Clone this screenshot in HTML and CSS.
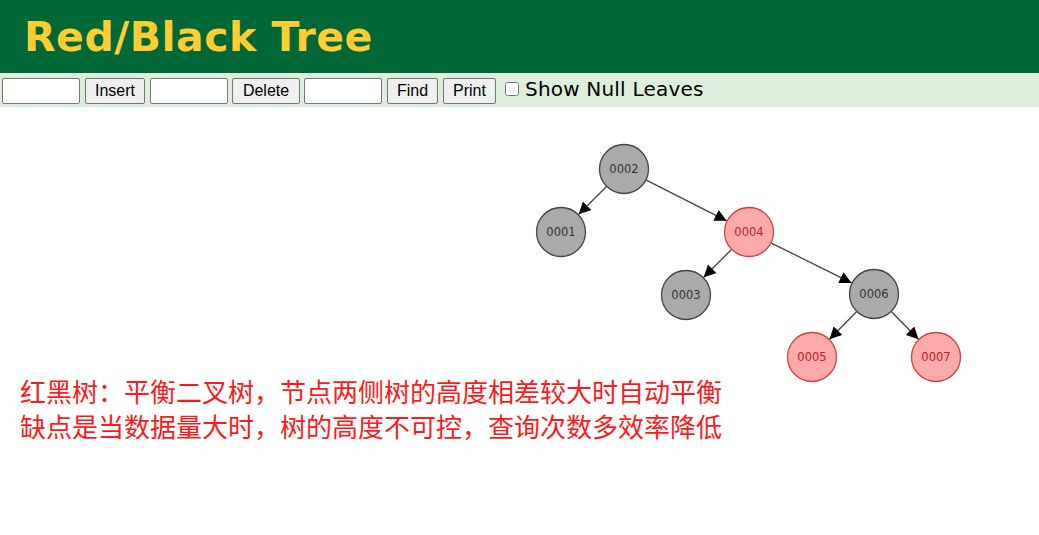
FILE: index.html
```html
<!DOCTYPE html>
<html>
<head>
<meta charset="utf-8">
<title>Red/Black Tree</title>
<link rel="stylesheet" href="styles.css">
</head>
<body>
<header class="header">
  <h1 class="title">Red/Black Tree</h1>
</header>
<div class="toolbar">
  <input class="field" type="text">
  <button class="btn btn-insert">Insert</button>
  <input class="field" type="text">
  <button class="btn btn-delete">Delete</button>
  <input class="field" type="text">
  <button class="btn btn-find">Find</button>
  <button class="btn btn-print">Print</button>
  <label class="nulls"><input class="check" type="checkbox">Show Null Leaves</label>
</div>
<main class="content">
  <svg class="tree" width="1039" height="266" viewBox="0 107 1039 266">
    <defs>
      <marker id="arrow" markerUnits="userSpaceOnUse" markerWidth="12" markerHeight="12" refX="12" refY="6" orient="auto">
        <path d="M0,0 L12,6 L0,12 z" fill="#000"/>
      </marker>
    </defs>
    <g class="edges">
      <line x1="606.3" y1="186.7" x2="578.7" y2="214.3" marker-end="url(#arrow)"/>
      <line x1="646.3" y1="180.2" x2="726.7" y2="220.8" marker-end="url(#arrow)"/>
      <line x1="731.3" y1="249.7" x2="703.7" y2="277.3" marker-end="url(#arrow)"/>
      <line x1="771.4" y1="243.1" x2="851.6" y2="282.9" marker-end="url(#arrow)"/>
      <line x1="856.5" y1="311.8" x2="829.5" y2="339.2" marker-end="url(#arrow)"/>
      <line x1="891.5" y1="311.8" x2="918.5" y2="339.2" marker-end="url(#arrow)"/>
    </g>
    <g class="node black"><circle cx="624" cy="169" r="24.5"/><text x="624" y="169">0002</text></g>
    <g class="node black"><circle cx="561" cy="232" r="24.5"/><text x="561" y="232">0001</text></g>
    <g class="node red"><circle cx="749" cy="232" r="24.5"/><text x="749" y="232">0004</text></g>
    <g class="node black"><circle cx="686" cy="295" r="24.5"/><text x="686" y="295">0003</text></g>
    <g class="node black"><circle cx="874" cy="294" r="24.5"/><text x="874" y="294">0006</text></g>
    <g class="node red"><circle cx="812" cy="357" r="24.5"/><text x="812" y="357">0005</text></g>
    <g class="node red"><circle cx="936" cy="357" r="24.5"/><text x="936" y="357">0007</text></g>
  </svg>
  <p class="note">红黑树：平衡二叉树，节点两侧树的高度相差较大时自动平衡<br>缺点是当数据量大时，树的高度不可控，查询次数多效率降低</p>
</main>
</body>
</html>
```

FILE: styles.css
```css
html, body {
  margin: 0;
  padding: 0;
  background: #ffffff;
}

body {
  font-family: "Liberation Sans", Arial, sans-serif;
}

.header {
  background: #006837;
  height: 73px;
  display: flex;
  align-items: center;
  padding-left: 24px;
}

.title {
  margin: 0;
  font-family: "DejaVu Sans", Verdana, sans-serif;
  font-weight: bold;
  font-size: 41px;
  letter-spacing: 0.5px;
  color: #ffcc33;
  line-height: 1;
  padding-top: 2px;
}

.toolbar {
  background: #ddeedd;
  height: 34px;
  display: flex;
  align-items: center;
  padding-left: 2px;
  box-sizing: border-box;
}

.field {
  width: 78px;
  height: 26px;
  box-sizing: border-box;
  border: 1px solid #767676;
  border-radius: 2px;
  background: #fff;
  margin: 1px 5px 0 0;
  padding: 0 2px;
}

.btn {
  height: 26px;
  box-sizing: border-box;
  border: 1px solid #767676;
  border-radius: 2px;
  background: #efefef;
  font-family: "Liberation Sans", Arial, sans-serif;
  font-size: 16px;
  color: #000;
  padding: 0;
  margin: 1px 5px 0 0;
}

.btn-insert { width: 60px; }
.btn-delete { width: 68px; margin-right: 4px; }
.btn-find { width: 51px; }
.btn-print { width: 53px; margin-right: 9px; }

.field:nth-of-type(2) { margin-right: 4px; }

.nulls {
  display: flex;
  align-items: center;
  font-family: "DejaVu Sans", Verdana, sans-serif;
  font-size: 20px;
  letter-spacing: 0.2px;
  color: #000;
  margin-top: -3px;
}

.check {
  width: 14px;
  height: 14px;
  margin: 0 6px 0 0;
}

.content {
  position: relative;
}

.tree {
  display: block;
  overflow: visible;
}

.edges line {
  stroke: #444;
  stroke-width: 1.3;
}

.node circle {
  stroke-width: 1.3;
}

.node text {
  font-family: "DejaVu Sans", Verdana, sans-serif;
  font-size: 11.5px;
  text-anchor: middle;
  dominant-baseline: central;
}

.black circle {
  fill: #aaaaaa;
  stroke: #444444;
}

.black text {
  fill: #333333;
}

.red circle {
  fill: #ffaaaa;
  stroke: #cc4444;
}

.red text {
  fill: #bb2222;
}

.note {
  margin: 0;
  padding-left: 20px;
  font-family: "Noto Sans CJK SC", sans-serif;
  font-size: 26px;
  line-height: 35px;
  color: #ff1a1a;
}
```
